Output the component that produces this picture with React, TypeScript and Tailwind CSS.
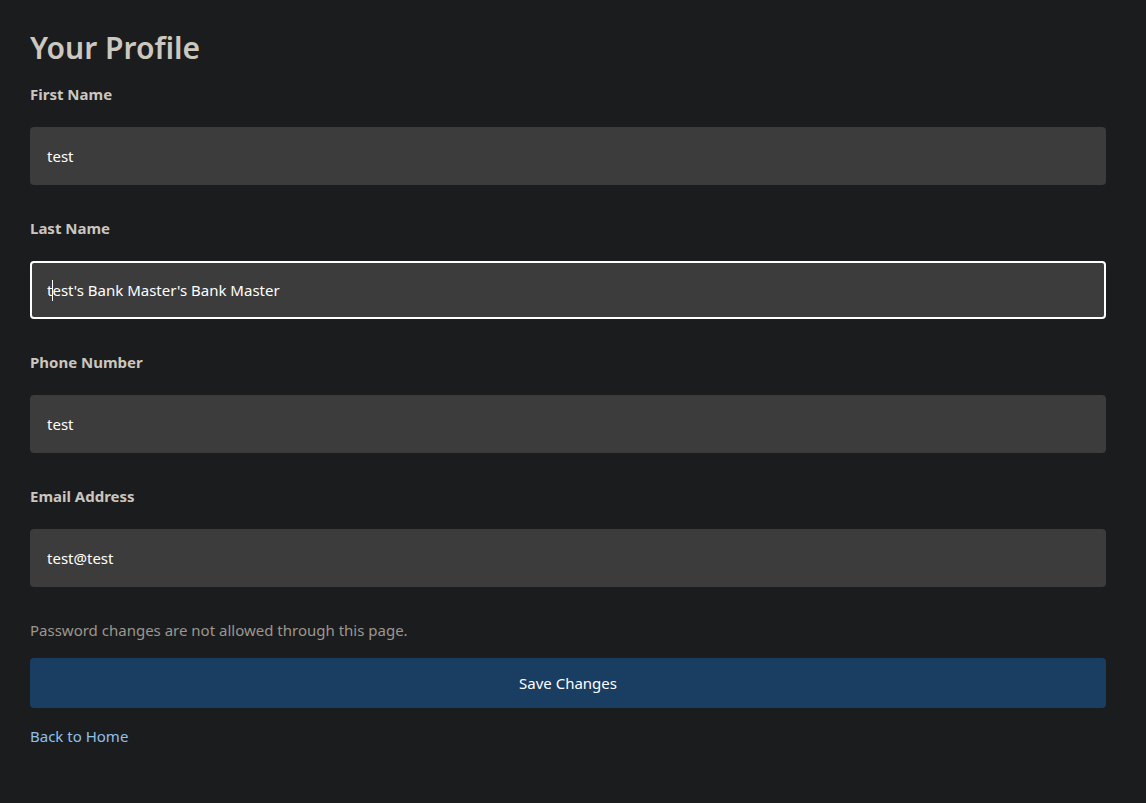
import React from 'react';

const fields = [
  { label: 'First Name', value: 'test' },
  { label: 'Last Name', value: "test's Bank Master's Bank Master", focused: true },
  { label: 'Phone Number', value: 'test' },
  { label: 'Email Address', value: 'test@test' },
];

export default function App() {
  return (
    <div className="min-h-screen bg-[#1b1c1e] px-[30px] pt-[27px] pb-10 font-['Noto_Sans',sans-serif]">
      <div className="w-[1076px]">
        <h1 className="text-[30px] leading-[42px] font-semibold text-[#cdc8bf]">Your Profile</h1>

        <form className="mt-[14px]" onSubmit={(e) => e.preventDefault()}>
          {fields.map((f) => (
            <div key={f.label} className="mb-[32px]">
              <label className="block text-[15px] leading-[22px] font-bold text-[#cbc6be] mb-[22px]">{f.label}</label>
              <div className="relative">
                <input
                  type="text"
                  readOnly
                  value={f.value}
                  className={`w-full h-[58px] rounded-[4px] bg-[#3c3c3c] text-[15px] text-white outline-none ${
                    f.focused ? 'border-2 border-white px-[15px]' : 'border-0 px-[17px]'
                  }`}
                />
                {/* text caret */}
                {f.focused && (
                  <span className="absolute left-[22px] top-[19px] h-[21px] w-px bg-white" />
                )}
              </div>
            </div>
          ))}

          <p className="text-[15px] leading-[22px] text-[#9c978f]">Password changes are not allowed through this page.</p>

          <button
            type="submit"
            className="mt-[17px] w-full h-[50px] rounded-[4px] bg-[#1a3d62] text-[15px] text-white"
          >
            Save Changes
          </button>
        </form>

        <a href="#" className="block mt-[17px] text-[15px] leading-[22px] text-[#8ec0ec]">Back to Home</a>
      </div>
    </div>
  );
}
